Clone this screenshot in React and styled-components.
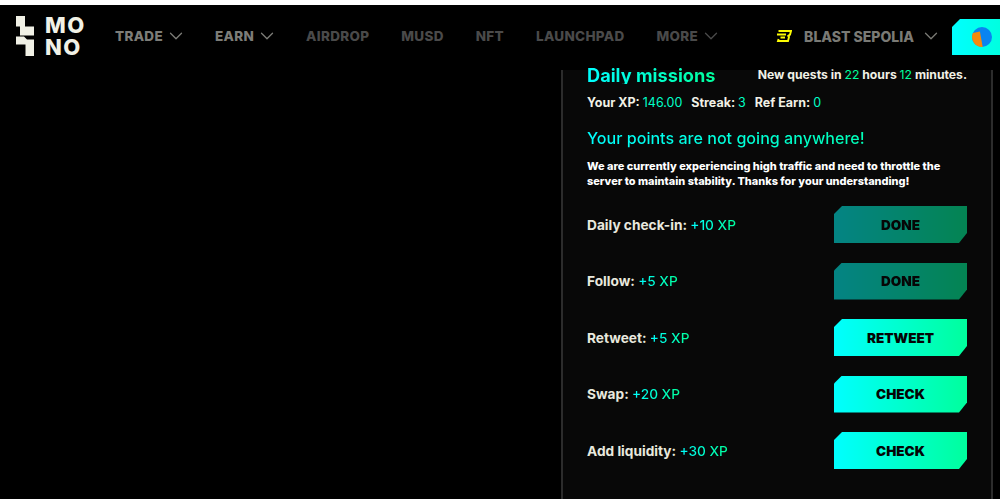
import styled, { createGlobalStyle } from "styled-components";
import { ChevronDown } from "lucide-react";

const GlobalStyle = createGlobalStyle`
  html, body {
    margin: 0;
    height: 100%;
    background: #000;
    overflow: hidden;
    font-family: Inter, "Noto Sans", sans-serif;
  }
`;

const Page = styled.div`
  width: 1000px;
  height: 499px;
  overflow: hidden;
  border-top: 5px solid #fff;
  box-sizing: border-box;
  background: #000;
`;

const Header = styled.header`
  display: flex;
  align-items: center;
  height: 65px;
  box-sizing: border-box;
  padding: 0 0 3px 16px;
`;

const LogoWrap = styled.div`
  display: flex;
  align-items: center;
  gap: 11px;
  margin-right: 26px;
`;

const Wordmark = styled.div`
  color: #f1f1e6;
  font-size: 22px;
  font-weight: 800;
  line-height: 22px;
  letter-spacing: 1.5px;
  width: 44px;
`;

const Nav = styled.nav`
  display: flex;
  align-items: center;
  gap: 32px;
  flex: 1;
`;

const NavItem = styled.div`
  display: flex;
  align-items: center;
  gap: 2px;
  font-size: 13.5px;
  font-weight: 800;
  letter-spacing: 0.3px;
  color: ${(p) => (p.$dim ? "#4a4a4a" : "#7d7d78")};
`;

const Chevron = styled(ChevronDown)`
  margin-right: -4px;
  flex: none;
`;

const Network = styled.div`
  display: flex;
  align-items: center;
  gap: 6px;
  font-size: 14px;
  font-weight: 800;
  color: #7a7a75;
  margin-right: 14px;

  svg:first-child {
    margin-right: 6px;
  }
`;

const Wallet = styled.div`
  display: flex;
  align-items: center;
  width: 48px;
  height: 36px;
  margin-top: 2px;
  padding-left: 20px;
  box-sizing: border-box;
  flex: none;
  background: linear-gradient(90deg, #00ffff, #00ffe0);
  clip-path: polygon(8px 0, 100% 0, 100% 100%, 0 100%, 0 8px);
`;

const Body = styled.main`
  display: flex;
  justify-content: flex-end;
  padding-right: 7px;
`;

const Panel = styled.section`
  width: 432px;
  height: 429px;
  box-sizing: border-box;
  background: #080808;
  border-left: 2px solid #2c2c2c;
  border-right: 2px solid #2c2c2c;
  padding: 0 24px;
  color: #f1f1e6;
`;

const TitleRow = styled.div`
  display: flex;
  justify-content: space-between;
  align-items: center;
  height: 17px;
  margin-top: -3px;
`;

const Title = styled.h2`
  margin: 0;
  font-size: 18.2px;
  font-weight: 700;
  line-height: 17px;
  background: linear-gradient(90deg, #00ffff, #00ff9d);
  -webkit-background-clip: text;
  background-clip: text;
  color: transparent;
`;

const Quests = styled.div`
  font-size: 12.2px;
  font-weight: 700;
  white-space: nowrap;
  position: relative;
  top: -1px;
`;

const Accent = styled.span`
  color: ${(p) => p.$color || "#00ffc8"};
  font-weight: 400;
`;

const Stats = styled.div`
  display: flex;
  gap: 9px;
  margin-top: 11px;
  font-size: 12.5px;
  font-weight: 700;
  line-height: 16px;
`;

const Notice = styled.h3`
  margin: 17px 0 0;
  font-size: 16.1px;
  font-weight: 500;
  line-height: 20px;
  background: linear-gradient(90deg, #00ffff, #00ff9d);
  -webkit-background-clip: text;
  background-clip: text;
  color: transparent;
`;

const NoticeText = styled.p`
  margin: 11px 0 0;
  max-width: 370px;
  font-size: 10.95px;
  font-weight: 800;
  line-height: 15px;
  color: #fff;
`;

const Missions = styled.div`
  display: flex;
  flex-direction: column;
  gap: 19.5px;
  margin-top: 17px;
`;

const Mission = styled.div`
  display: flex;
  align-items: center;
  justify-content: space-between;
  height: 37px;
`;

const MissionLabel = styled.div`
  font-size: 13.7px;
  font-weight: 700;
  color: #e8e8de;
`;

const Xp = styled.span`
  font-weight: 500;
  background: linear-gradient(90deg, #00ffff, #00ff9d);
  -webkit-background-clip: text;
  background-clip: text;
  color: transparent;
`;

const ActionButton = styled.button`
  width: 133px;
  height: 37px;
  border: 0;
  padding: 0;
  font-family: inherit;
  font-size: 13.5px;
  font-weight: 900;
  color: #050505;
  background: linear-gradient(90deg, #00ffff, #00ff9d);
  opacity: ${(p) => (p.$done ? 0.5 : 1)};
  clip-path: polygon(8px 0, 100% 0, 100% calc(100% - 10px), calc(100% - 8px) 100%, 0 100%, 0 8px);
`;

const LogoMark = () => (
  <svg width="18" height="40" viewBox="0 0 18 40" fill="#f1f1e6">
    <path d="M0 0H9V10.5H18V19.5H4V10.5H0Z" />
    <path d="M0 20.5H8L11 23.5H18V40H9.5V28.5H0Z" />
  </svg>
);

const BlastIcon = () => (
  <svg width="16" height="12" viewBox="0 0 16 12" fill="none" stroke="#fcfc03" strokeWidth="1.9">
    <path d="M2.5 1H15L14 4.6 12.2 6 13 7 12 11H2L2.6 9" />
    <path d="M1 4.5H10M4.5 7.5H9" />
  </svg>
);

const PieAvatar = () => (
  <svg width="20" height="20" viewBox="0 0 20 20">
    <circle cx="10" cy="10" r="10" fill="#0a84f0" />
    <path d="M7.9 4.5 10.7 20A10 10 0 0 1 .9 6Z" fill="#f58a0b" />
  </svg>
);

const missions = [
  { label: "Daily check-in:", xp: "+10 XP", action: "DONE", done: true },
  { label: "Follow:", xp: "+5 XP", action: "DONE", done: true },
  { label: "Retweet:", xp: "+5 XP", action: "RETWEET" },
  { label: "Swap:", xp: "+20 XP", action: "CHECK" },
  { label: "Add liquidity:", xp: "+30 XP", action: "CHECK" },
];

const App = () => {
  return (
    <Page>
      <GlobalStyle />
      <Header>
        <LogoWrap>
          <LogoMark />
          <Wordmark>MO NO</Wordmark>
        </LogoWrap>
        <Nav>
          <NavItem>TRADE <Chevron size={22} strokeWidth={1.4} /></NavItem>
          <NavItem>EARN <Chevron size={22} strokeWidth={1.4} /></NavItem>
          <NavItem $dim>AIRDROP</NavItem>
          <NavItem $dim>MUSD</NavItem>
          <NavItem $dim>NFT</NavItem>
          <NavItem $dim>LAUNCHPAD</NavItem>
          <NavItem $dim>MORE <Chevron size={22} strokeWidth={1.4} /></NavItem>
        </Nav>
        <Network>
          <BlastIcon />
          BLAST SEPOLIA
          <Chevron size={22} strokeWidth={1.4} />
        </Network>
        <Wallet>
          <PieAvatar />
        </Wallet>
      </Header>
      <Body>
        <Panel>
          <TitleRow>
            <Title>Daily missions</Title>
            <Quests>
              New quests in <Accent $color="#00ff9d">22</Accent> hours <Accent $color="#00ff9d">12</Accent> minutes.
            </Quests>
          </TitleRow>
          <Stats>
            <div>Your XP: <Accent>146.00</Accent></div>
            <div>Streak: <Accent>3</Accent></div>
            <div>Ref Earn: <Accent>0</Accent></div>
          </Stats>
          <Notice>Your points are not going anywhere!</Notice>
          <NoticeText>
            We are currently experiencing high traffic and need to throttle the
            server to maintain stability. Thanks for your understanding!
          </NoticeText>
          <Missions>
            {missions.map((m) => (
              <Mission key={m.label}>
                <MissionLabel>{m.label} <Xp>{m.xp}</Xp></MissionLabel>
                <ActionButton $done={m.done}>{m.action}</ActionButton>
              </Mission>
            ))}
          </Missions>
        </Panel>
      </Body>
    </Page>
  );
};

export default App;
